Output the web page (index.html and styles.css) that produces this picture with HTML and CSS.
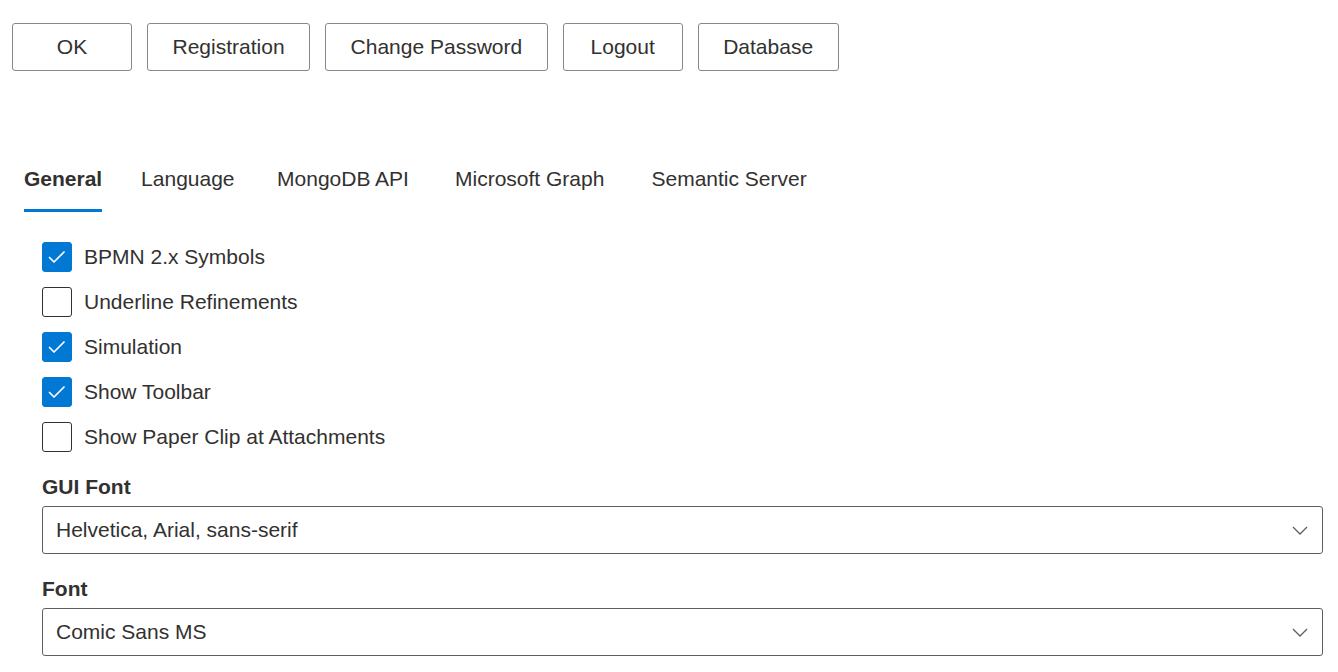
FILE: index.html
```html
<!DOCTYPE html>
<html lang="en">
<head>
<meta charset="utf-8">
<title>Settings</title>
<link rel="stylesheet" href="styles.css">
</head>
<body>
<div class="page">
  <div class="toolbar">
    <button class="btn btn-ok">OK</button>
    <button class="btn">Registration</button>
    <button class="btn">Change Password</button>
    <button class="btn">Logout</button>
    <button class="btn">Database</button>
  </div>

  <div class="tabs">
    <span class="tab active" data-content="General">General</span>
    <span class="tab" data-content="Language">Language</span>
    <span class="tab" data-content="MongoDB API">MongoDB API</span>
    <span class="tab" data-content="Microsoft Graph">Microsoft Graph</span>
    <span class="tab" data-content="Semantic Server">Semantic Server</span>
  </div>

  <div class="panel">
    <div class="checks">
      <label class="check checked"><span class="box"><svg viewBox="0 0 30 30" width="30" height="30"><polyline points="7.5,15.5 12,20 22,10" fill="none" stroke="#fff" stroke-width="1.7" stroke-linecap="round" stroke-linejoin="round"/></svg></span><span class="text">BPMN 2.x Symbols</span></label>
      <label class="check"><span class="box"></span><span class="text">Underline Refinements</span></label>
      <label class="check checked"><span class="box"><svg viewBox="0 0 30 30" width="30" height="30"><polyline points="7.5,15.5 12,20 22,10" fill="none" stroke="#fff" stroke-width="1.7" stroke-linecap="round" stroke-linejoin="round"/></svg></span><span class="text">Simulation</span></label>
      <label class="check checked"><span class="box"><svg viewBox="0 0 30 30" width="30" height="30"><polyline points="7.5,15.5 12,20 22,10" fill="none" stroke="#fff" stroke-width="1.7" stroke-linecap="round" stroke-linejoin="round"/></svg></span><span class="text">Show Toolbar</span></label>
      <label class="check"><span class="box"></span><span class="text">Show Paper Clip at Attachments</span></label>
    </div>

    <div class="field">
      <div class="field-label">GUI Font</div>
      <div class="dropdown"><span class="value">Helvetica, Arial, sans-serif</span><svg class="chev" viewBox="0 0 16 10" width="16" height="10"><polyline points="1,1 8,8 15,1" fill="none" stroke="#605e5c" stroke-width="1.3"/></svg></div>
    </div>

    <div class="field">
      <div class="field-label">Font</div>
      <div class="dropdown"><span class="value">Comic Sans MS</span><svg class="chev" viewBox="0 0 16 10" width="16" height="10"><polyline points="1,1 8,8 15,1" fill="none" stroke="#605e5c" stroke-width="1.3"/></svg></div>
    </div>
  </div>
</div>
</body>
</html>
```

FILE: styles.css
```css
* { box-sizing: border-box; }

html, body {
  margin: 0;
  padding: 0;
  background: #ffffff;
}

body {
  font-family: "Liberation Sans", Arial, sans-serif;
  font-size: 21px;
  color: #323130;
}

.page {
  padding: 23px 15px 0 12px;
}

.toolbar {
  display: flex;
  gap: 15px;
}

.btn {
  height: 48px;
  min-width: 120px;
  padding: 0 24.5px 2px;
  border: 1px solid #8a8886;
  border-radius: 3px;
  background: #ffffff;
  color: #323130;
  font-family: inherit;
  font-size: 21px;
  font-weight: 400;
  line-height: 1;
}

.tabs {
  display: flex;
  margin-top: 75px;
  height: 66px;
}

.tab {
  position: relative;
  display: inline-block;
  height: 66px;
  line-height: 66px;
  padding: 0 12px;
  margin-right: 12px;
  text-align: center;
  white-space: nowrap;
  color: #323130;
}

.tab::before {
  content: attr(data-content);
  display: block;
  height: 1px;
  margin-bottom: -1px;
  overflow: hidden;
  visibility: hidden;
  font-weight: 700;
}

.tab.active {
  font-weight: 700;
}

.tab.active::after {
  content: "";
  position: absolute;
  left: 12px;
  right: 12px;
  bottom: 0;
  height: 3px;
  background: #0078d4;
}

.panel {
  padding: 30px 0 0 30px;
}

.checks {
  display: flex;
  flex-direction: column;
  gap: 15px;
}

.check {
  display: flex;
  align-items: center;
  gap: 12px;
  height: 30px;
}

.box {
  width: 30px;
  height: 30px;
  border: 1px solid #323130;
  border-radius: 3px;
  background: #ffffff;
  display: flex;
  align-items: center;
  justify-content: center;
  flex: none;
}

.box svg {
  display: block;
  flex: none;
}

.check.checked .box {
  background: #0078d4;
  border-color: #0078d4;
}

.check .text {
  line-height: 30px;
}

.field {
  margin-top: 20px;
}

.field-label {
  font-weight: 700;
  line-height: 30px;
  padding-bottom: 4px;
}

.dropdown {
  height: 48px;
  border: 1px solid #605e5c;
  border-radius: 3px;
  display: flex;
  align-items: center;
  justify-content: space-between;
  padding: 0 14px 0 13px;
}

.dropdown .value {
  line-height: 46px;
}

.chev {
  display: block;
  margin-top: 1px;
}
```
